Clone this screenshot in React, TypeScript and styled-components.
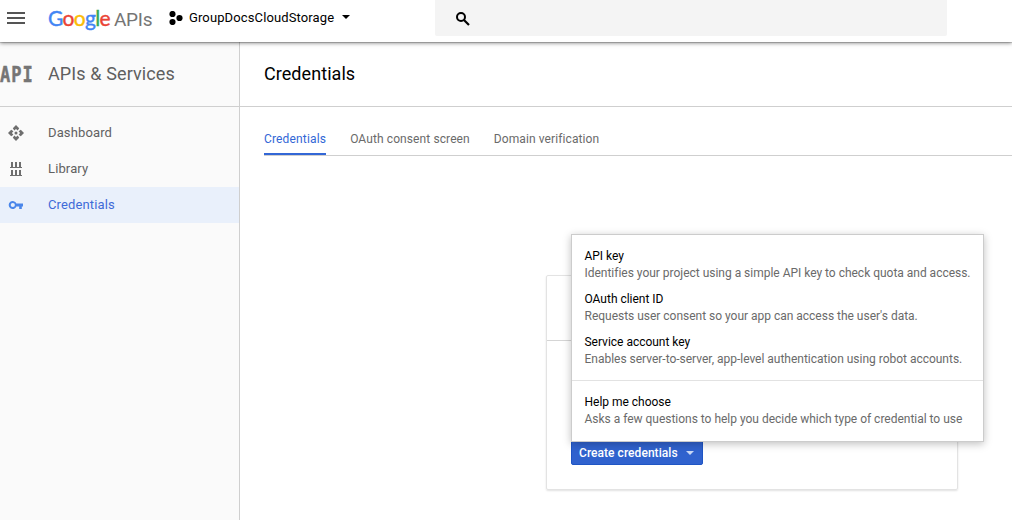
import React from "react";
import styled, { createGlobalStyle } from "styled-components";

const GlobalStyle = createGlobalStyle`
  * { box-sizing: border-box; }
  body {
    margin: 0;
    background: #fff;
    color: #000;
    font-family: Roboto, "Liberation Sans", sans-serif;
    font-size: 12px;
    overflow: hidden;
  }
`;

const Page = styled.div`
  display: flex;
  flex-direction: column;
  width: 1012px;
  height: 520px;
`;

const TopBar = styled.header`
  position: relative;
  z-index: 1;
  display: flex;
  align-items: flex-start;
  flex: none;
  height: 42px;
  background: #fff;
  box-shadow: 0 1px 0 rgba(0, 0, 0, 0.14), 0 1px 4px rgba(0, 0, 0, 0.5);
`;

const MenuButton = styled.button`
  display: flex;
  align-items: flex-start;
  width: 48px;
  height: 36px;
  padding: 12px 0 0 7px;
  border: 0;
  background: none;
`;

const Brand = styled.div`
  display: flex;
  align-items: baseline;
  width: 121px;
  height: 36px;
  line-height: 35px;
  white-space: nowrap;
`;

const GoogleWord = styled.span`
  width: 66px;
  font-family: Lato, sans-serif;
  font-size: 21px;
  letter-spacing: -0.7px;
  -webkit-text-stroke: 0.4px currentColor;
`;

const Letter = styled.span<{ $color: string }>`
  color: ${(p) => p.$color};
`;

const ApisWord = styled.span`
  color: #757575;
  font-size: 19px;
  font-weight: 400;
  letter-spacing: -0.3px;
`;

const ProjectPicker = styled.div`
  display: flex;
  align-items: center;
  width: 266px;
  height: 36px;
  font-size: 13px;
`;

const ProjectName = styled.span`
  margin: 0 8px 2px 6px;
  letter-spacing: 0.12px;
`;

const Caret = styled.span<{ $color: string }>`
  margin-bottom: 2px;
  border: 4px solid transparent;
  border-top-color: ${(p) => p.$color};
  border-bottom: 0;
`;

const SearchBox = styled.div`
  width: 512px;
  height: 36px;
  padding: 12px 0 0 21px;
  border-radius: 0 0 2px 2px;
  background: #f4f4f4;
  line-height: 0;
`;

const Body = styled.div`
  display: flex;
  flex: 1;
  min-height: 0;
`;

const Sidebar = styled.aside`
  width: 240px;
  flex: none;
  border-right: 1px solid #cfcfcf;
  background: #fafafa;
`;

const SideHeader = styled.div`
  display: flex;
  align-items: center;
  height: 65px;
  padding-bottom: 1px;
  border-bottom: 1px solid #cfcfcf;
  color: #5f5f5f;
  font-size: 18px;
  letter-spacing: 0.11px;
`;

const ApiMark = styled.span`
  width: 48px;
  color: #757575;
  font-family: "DejaVu Sans Mono", monospace;
  font-size: 17px;
  font-weight: 700;
  letter-spacing: 1px;
  -webkit-text-stroke: 0.4px currentColor;
  transform: scaleY(1.25);
`;

const Nav = styled.nav`
  padding-top: 8px;
`;

const NavItem = styled.a<{ $active?: boolean }>`
  display: flex;
  align-items: center;
  height: 36px;
  padding-left: 8px;
  background: ${(p) => (p.$active ? "#e9f0fb" : "transparent")};
  color: ${(p) => (p.$active ? "#3f6bd8" : "#616161")};
  font-size: 13px;
  letter-spacing: 0.13px;

  svg {
    width: 16px;
    height: 16px;
    margin-right: 24px;
    fill: ${(p) => (p.$active ? "#4a86ea" : "#6e6e6e")};
  }

  span {
    margin-bottom: 2px;
  }
`;

const Main = styled.main`
  flex: 1;
  min-width: 0;
`;

const Title = styled.h1`
  height: 65px;
  margin: 0;
  padding-left: 24px;
  border-bottom: 1px solid #cfcfcf;
  font-size: 18px;
  font-weight: 400;
  letter-spacing: 0.06px;
  line-height: 64px;
`;

const Tabs = styled.div`
  display: flex;
  align-items: flex-end;
  gap: 24px;
  height: 49px;
  margin-left: 24px;
  border-bottom: 1px solid #cfcfcf;
`;

const Tab = styled.a<{ $active?: boolean }>`
  height: 32px;
  padding-top: 2px;
  border-bottom: 2px solid ${(p) => (p.$active ? "#3367d6" : "transparent")};
  color: ${(p) => (p.$active ? "#3367d6" : "#6a6a6a")};
  line-height: 28px;
  letter-spacing: ${(p) => (p.$active ? "0.16px" : "0.1px")};
`;

const Card = styled.section`
  display: flex;
  flex-direction: column;
  width: 412px;
  height: 215px;
  margin: 119px 0 0 306px;
  border: 1px solid #e3e3e3;
  border-radius: 2px;
  box-shadow: 0 1px 2px rgba(0, 0, 0, 0.12);
`;

const CardHeader = styled.div`
  height: 65px;
  border-bottom: 1px solid #d5d5d5;
`;

const CardActions = styled.div`
  display: flex;
  flex: 1;
  align-items: flex-end;
  padding: 0 24px 24px;
`;

const Dropdown = styled.div`
  position: relative;
`;

const CreateButton = styled.button`
  display: flex;
  align-items: center;
  gap: 8px;
  width: 132px;
  height: 28px;
  padding: 3px 7px 0;
  border: 1px solid #1f55c4;
  border-radius: 2px;
  background: #3062ce;
  color: #fff;
  font: 500 12px Roboto, sans-serif;
  letter-spacing: 0.05px;
  white-space: nowrap;

  ${Caret} {
    margin-bottom: 0;
  }
`;

const Menu = styled.div`
  position: absolute;
  left: 0;
  bottom: 23px;
  width: 413px;
  height: 208px;
  padding-top: 13px;
  border: 1px solid #cccccc;
  background: #fff;
  box-shadow: 0 2px 8px rgba(0, 0, 0, 0.25);
`;

const MenuItem = styled.div`
  height: 43px;
  padding-left: 12.5px;
  line-height: 17px;
  letter-spacing: -0.015px;
  white-space: nowrap;
`;

const Hint = styled.div`
  color: #6a6a6a;
`;

const Divider = styled.div`
  height: 1px;
  margin: 3px 0 13px;
  background: #e2e2e2;
`;

const googleLetters: [string, string][] = [
  ["G", "#4285f4"],
  ["o", "#ea4335"],
  ["o", "#fbbc05"],
  ["g", "#4285f4"],
  ["l", "#34a853"],
  ["e", "#ea4335"],
];

const options = [
  { name: "API key", hint: "Identifies your project using a simple API key to check quota and access." },
  { name: "OAuth client ID", hint: "Requests user consent so your app can access the user's data." },
  { name: "Service account key", hint: "Enables server-to-server, app-level authentication using robot accounts." },
];

const DashboardIcon = () => (
  <svg viewBox="0 0 16 16">
    <path d="M8 0l3.200 3.200-1.500 2.200L8 3.900 6.300 5.400 4.800 3.200zM8 16l3.200-3.200-1.500-2.200L8 12.100 6.300 10.600 4.800 12.800zM0 8l3.200-3.200 2.200 1.500L3.900 8 5.400 9.700 3.200 11.200zM16 8l-3.200-3.200-2.200 1.500L12.100 8 10.600 9.700l2.200 1.500z" />
    <circle cx="8" cy="8" r="1.500" />
  </svg>
);

const LibraryIcon = () => (
  <svg viewBox="0 0 16 16" shapeRendering="crispEdges">
    <path d="M3 1h2v5h2V1h2v5h2V1h2v5h1v1H2V6h1zM3 9h2v5h2V9h2v5h2V9h2v5h1v1H2v-1h1z" />
  </svg>
);

const KeyIcon = () => (
  <svg viewBox="0 0 16 16">
    <path
      fillRule="evenodd"
      d="M8.400 6.600H15v2.900h-1.200V12h-2.600V9.500H8.400A4 4 0 1 1 8.400 6.600zM4.800 5.900a2.100 2.100 0 1 0 0 4.200 2.100 2.100 0 0 0 0-4.200z"
    />
  </svg>
);

export default function App() {
  return (
    <Page>
      <GlobalStyle />
      <TopBar>
        <MenuButton aria-label="Menu">
          <svg width="18" height="12" fill="#555" shapeRendering="crispEdges">
            <path d="M0 0h18v2H0zM0 5h18v2H0zM0 10h18v2H0z" />
          </svg>
        </MenuButton>
        <Brand>
          <GoogleWord>
            {googleLetters.map(([char, color], i) => (
              <Letter key={i} $color={color}>{char}</Letter>
            ))}
          </GoogleWord>
          <ApisWord>APIs</ApisWord>
        </Brand>
        <ProjectPicker>
          <svg width="14" height="14">
            <circle cx="3.500" cy="3" r="3.100" />
            <circle cx="3.500" cy="11" r="3.100" />
            <circle cx="10.500" cy="7" r="3.100" />
          </svg>
          <ProjectName>GroupDocsCloudStorage</ProjectName>
          <Caret $color="#000" />
        </ProjectPicker>
        <SearchBox>
          <svg width="14" height="14" fill="none" stroke="#000" strokeWidth="2">
            <circle cx="5" cy="5" r="4" />
            <path d="M8 8l5 5" strokeWidth="2.200" />
          </svg>
        </SearchBox>
      </TopBar>
      <Body>
        <Sidebar>
          <SideHeader>
            <ApiMark>API</ApiMark>
            <span>APIs &amp; Services</span>
          </SideHeader>
          <Nav>
            <NavItem><DashboardIcon /><span>Dashboard</span></NavItem>
            <NavItem><LibraryIcon /><span>Library</span></NavItem>
            <NavItem $active><KeyIcon /><span>Credentials</span></NavItem>
          </Nav>
        </Sidebar>
        <Main>
          <Title>Credentials</Title>
          <Tabs>
            <Tab $active>Credentials</Tab>
            <Tab>OAuth consent screen</Tab>
            <Tab>Domain verification</Tab>
          </Tabs>
          <Card>
            <CardHeader />
            <CardActions>
              <Dropdown>
                <CreateButton>
                  Create credentials
                  <Caret $color="#c9d8f5" />
                </CreateButton>
                <Menu>
                  {options.map((o) => (
                    <MenuItem key={o.name}>
                      {o.name}
                      <Hint>{o.hint}</Hint>
                    </MenuItem>
                  ))}
                  <Divider />
                  <MenuItem>
                    Help me choose
                    <Hint>Asks a few questions to help you decide which type of credential to use</Hint>
                  </MenuItem>
                </Menu>
              </Dropdown>
            </CardActions>
          </Card>
        </Main>
      </Body>
    </Page>
  );
}
